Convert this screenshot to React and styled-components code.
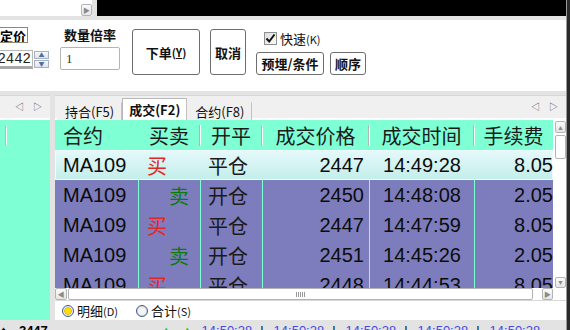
import React from "react";
import styled, { createGlobalStyle } from "styled-components";

const GlobalStyle = createGlobalStyle`
  html, body { margin: 0; padding: 0; background: #e3e3e3; }
  body { font-family: "Liberation Sans", "Noto Sans CJK SC", sans-serif; }
`;

const AQUA = "#7fffd4";
const PURPLE = "#7d7dbe";

const Screen = styled.div`
  width: 570px;
  height: 330px;
  overflow: hidden;
  display: flex;
  background: #e3e3e3;
`;

const Main = styled.div`
  width: 566px;
  display: flex;
  flex-direction: column;
`;

const RightEdge = styled.div`
  width: 4px;
  background: linear-gradient(90deg, #9a9a9a 0 1px, #2a2a2a 1px);
`;

const TopStrip = styled.div`
  height: 16px;
  display: flex;
  gap: 5px;
`;

const ScrollStub = styled.div`
  width: 92px;
  background: #fff;
  display: flex;
  justify-content: flex-end;
  align-items: flex-end;
`;

const ArrowBtn = styled.div`
  width: ${p => p.$w || 10}px;
  height: ${p => p.$h || 11}px;
  border: 1px solid #b4b4b4;
  border-radius: 2px;
  background: linear-gradient(#fafafa, #e6e6e6);
  display: flex;
  align-items: center;
  justify-content: center;
  color: #8a8a8a;
  font-size: 7px;
  line-height: 1;
  box-sizing: border-box;
`;

const BlackBar = styled.div`
  flex: 1;
  background: #000;
`;

const Spacer = styled.div`
  height: ${p => p.$h}px;
  flex-shrink: 0;
`;

const Toolbar = styled.div`
  height: 71px;
  background: #fff;
  display: flex;
  align-items: flex-start;
  font-family: "Noto Sans CJK SC", sans-serif;
`;

const PriceGroup = styled.div`
  width: 50px;
  display: flex;
  flex-direction: column;
  padding-top: 7px;
`;

const PriceTag = styled.div`
  width: 28px;
  height: 16px;
  box-sizing: border-box;
  border: 1px solid #8c8a6e;
  border-left: none;
  display: flex;
  justify-content: flex-end;
  align-items: center;
  overflow: hidden;
  white-space: nowrap;
  font-size: 13px;
  font-weight: 700;
  padding-right: 1px;
`;

const SpinRow = styled.div`
  display: flex;
  margin-top: 7px;
  gap: 1px;
`;

const SpinInput = styled.div`
  width: 33px;
  height: 19px;
  box-sizing: border-box;
  border: 1px solid #b8b8b8;
  border-left: none;
  border-bottom: 3px solid #a8a8a8;
  display: flex;
  justify-content: flex-end;
  align-items: center;
  font-family: "Liberation Mono", monospace;
  font-size: 14px;
  color: #222;
  padding-right: 1px;
`;

const SpinBtns = styled.div`
  display: flex;
  flex-direction: column;
  gap: 1px;
  margin-top: 1px;
`;

const SpinBtn = styled.div`
  width: 15px;
  height: 8px;
  box-sizing: border-box;
  border: 1px solid #a8b0c0;
  background: linear-gradient(#f6f8fb, #dfe4ec);
  display: flex;
  align-items: center;
  justify-content: center;
  color: #4f6fa8;
  font-size: 6px;
  line-height: 1;
`;

const QtyGroup = styled.div`
  margin-left: 10px;
  width: 60px;
  display: flex;
  flex-direction: column;
  align-items: center;
  padding-top: 7px;
`;

const Label = styled.div`
  font-size: 13px;
  font-weight: ${p => (p.$bold ? 700 : 400)};
  line-height: 16px;
  color: #111;
  white-space: nowrap;
`;

const QtyInput = styled.div`
  margin-top: 4px;
  width: 60px;
  height: 23px;
  box-sizing: border-box;
  border: 1px solid #b4b4b4;
  border-radius: 2px;
  display: flex;
  align-items: center;
  padding-left: 5px;
  font-family: "Liberation Serif", serif;
  font-size: 13px;
  color: #333;
`;

const BigButton = styled.div`
  margin-top: 9px;
  margin-left: ${p => p.$ml}px;
  width: ${p => p.$w}px;
  height: 46px;
  box-sizing: border-box;
  border: 1px solid #6e6e6e;
  border-radius: 3px;
  background: #fff;
  display: flex;
  align-items: center;
  justify-content: center;
  font-size: 13px;
  font-weight: 700;
  color: #111;
  white-space: nowrap;
`;

const SmallButton = styled.div`
  width: ${p => p.$w}px;
  height: 23px;
  box-sizing: border-box;
  border: 1px solid #6e6e6e;
  border-radius: 3px;
  background: #fff;
  display: flex;
  align-items: center;
  justify-content: center;
  font-size: 13px;
  font-weight: 700;
  color: #111;
  white-space: nowrap;
`;

const Key = styled.span`
  font-size: 11px;
  text-decoration: ${p => (p.$u ? "underline" : "none")};
`;

const OptGroup = styled.div`
  margin-left: 10px;
  display: flex;
  flex-direction: column;
  padding-top: 12px;
`;

const CheckRow = styled.div`
  display: flex;
  align-items: center;
  gap: 3px;
  margin-left: 8px;
  height: 13px;
`;

const CheckBox = styled.div`
  width: 13px;
  height: 13px;
  box-sizing: border-box;
  border: 1px solid #8e8f8f;
  background: linear-gradient(135deg, #dcdcdc, #fbfbfb);
  display: flex;
  align-items: center;
  justify-content: center;
`;

const OptButtons = styled.div`
  display: flex;
  gap: 6px;
  margin-top: 7px;
`;

const Lower = styled.div`
  height: 225px;
  display: flex;
  gap: 5px;
`;

const LeftPanel = styled.div`
  width: 50px;
  display: flex;
  flex-direction: column;
  background: ${AQUA};
`;

const TabBar = styled.div`
  height: 25px;
  background: #f0f0f0;
  border-top: 1px solid #d6d6d6;
  border-bottom: 2px solid #fff;
  box-sizing: border-box;
  display: flex;
  align-items: flex-end;
  padding-left: 2px;
  padding-right: 8px;
`;

const TabArrows = styled.div`
  margin-left: auto;
  align-self: center;
  display: flex;
  gap: 9px;
  color: #555;
  font-size: 9px;
  line-height: 1;
  padding-top: 1px;
`;

const Tab = styled.div`
  height: ${p => (p.$active ? 22 : 18)}px;
  padding: 0 ${p => (p.$active ? 6 : 7)}px;
  box-sizing: border-box;
  display: flex;
  align-items: center;
  font-family: "Noto Sans CJK SC", sans-serif;
  font-size: 13px;
  font-weight: ${p => (p.$active ? 700 : 400)};
  color: #111;
  background: ${p => (p.$active ? "#fff" : "#f0f0f0")};
  border: 1px solid ${p => (p.$active ? "#b8b8b8" : "transparent")};
  border-bottom: none;
  border-right: 1px solid #c2c2c2;
  margin-bottom: -2px;
`;

const LeftHeader = styled.div`
  height: 30px;
  position: relative;
  &::before {
    content: "";
    position: absolute;
    left: 5px;
    top: 5px;
    bottom: 4px;
    width: 1px;
    background: #b8b8b8;
    box-shadow: 1px 0 0 #fff;
  }
`;

const RightPanel = styled.div`
  width: 511px;
  display: flex;
  flex-direction: column;
  background: #fff;
`;

const TableArea = styled.div`
  height: 168px;
  display: flex;
`;

const GridViewport = styled.div`
  width: 498px;
  overflow: hidden;
  background: ${PURPLE};
`;

const COLS = "83px 62px 62px 107px 105px 79px";

const HeaderRow = styled.div`
  display: grid;
  grid-template-columns: ${COLS};
  height: 30px;
  background: ${AQUA};
`;

const HeadCell = styled.div`
  position: relative;
  display: flex;
  align-items: center;
  justify-content: ${p => (p.$left ? "flex-start" : "center")};
  padding-left: ${p => (p.$left ? 8 : 0)}px;
  font-family: "Noto Sans CJK SC", sans-serif;
  font-size: 20px;
  color: #1a1a1a;
  white-space: nowrap;
  & + &::before {
    content: "";
    position: absolute;
    left: -1px;
    top: 5px;
    bottom: 4px;
    width: 1px;
    background: #b4b4b4;
    box-shadow: 1px 0 0 #fff;
  }
`;

const Row = styled.div`
  display: grid;
  grid-template-columns: ${COLS};
  height: 30px;
  box-sizing: border-box;
  background: ${p => (p.$selected ? "linear-gradient(#e6f9fb, #c2eeea)" : PURPLE)};
  box-shadow: ${p => (p.$selected ? "inset 0 0 0 1px #eefcfc" : "none")};
  & > div + div {
    border-left: 1px solid ${p => (p.$selected ? "transparent" : AQUA)};
  }
`;

const Cell = styled.div`
  display: flex;
  align-items: center;
  justify-content: ${p => (p.$align === "right" ? "flex-end" : p.$align === "center" ? "center" : "flex-start")};
  padding: 0 ${p => p.$pr || 0}px 0 ${p => p.$pl || 0}px;
  font-size: 20px;
  color: #0c0c0c;
  white-space: nowrap;
  overflow: hidden;
`;

const CnCell = styled(Cell)`
  font-family: "Noto Sans CJK SC", sans-serif;
  color: ${p => p.$color || "#1a1a1a"};
`;

const VScroll = styled.div`
  width: 13px;
  background: #fff;
  display: flex;
  flex-direction: column;
  align-items: flex-end;
  padding-top: 1px;
  box-sizing: border-box;
`;

const VThumb = styled.div`
  width: 11px;
  height: 24px;
  margin-top: 2px;
  box-sizing: border-box;
  border: 1px solid #b4b4b4;
  border-radius: 2px;
  background: #fff;
`;

const VTrack = styled.div`
  flex: 1;
`;

const HScrollRow = styled.div`
  height: 12px;
  display: flex;
  background: #fff;
`;

const HScroll = styled.div`
  width: 498px;
  display: flex;
  align-items: stretch;
  gap: 1px;
`;

const HThumb = styled.div`
  flex: 1;
  margin-right: 8px;
  box-sizing: border-box;
  border: 1px solid #b4b4b4;
  border-radius: 2px;
  display: flex;
  align-items: center;
  justify-content: center;
`;

const Grip = styled.div`
  width: 10px;
  height: 5px;
  background: repeating-linear-gradient(90deg, #9a9a9a 0 1px, transparent 1px 2px);
`;

const RadioRow = styled.div`
  height: 20px;
  display: flex;
  align-items: center;
  padding-left: 7px;
  gap: 18px;
  border-top: 1px solid #d8d8d8;
  box-sizing: border-box;
  font-family: "Noto Sans CJK SC", sans-serif;
`;

const RadioItem = styled.div`
  display: flex;
  align-items: center;
  gap: 3px;
`;

const Radio = styled.div`
  width: 12px;
  height: 12px;
  border-radius: 50%;
  box-sizing: border-box;
  border: 1px solid #3c5a8a;
  background: radial-gradient(circle, ${p => (p.$on ? "#ffe100 0 2.5px, #e4b800 3.5px, #eef 4px" : "#f4f4f4 0 3px, #dcdcdc 5px")});
`;

const StatusBar = styled.div`
  flex: 1;
  display: flex;
  align-items: flex-start;
  padding-top: 4px;
  font-size: 13px;
  line-height: 14px;
  white-space: nowrap;
  overflow: hidden;
`;

const StatusText = styled.span`
  color: ${p => p.$color || "#000"};
  margin-left: ${p => p.$ml || 0}px;
  font-weight: ${p => (p.$bold ? 700 : 400)};
`;

const Check = () => (
  <svg width="11" height="11" viewBox="0 0 11 11">
    <path d="M1.5 5.5 L4.2 8.5 L9.5 1.5" fill="none" stroke="#111" strokeWidth="2" />
  </svg>
);

const trades = [
  { side: "买", oc: "平仓", price: "2447", time: "14:49:28", fee: "8.05" },
  { side: "卖", oc: "开仓", price: "2450", time: "14:48:08", fee: "2.05" },
  { side: "买", oc: "平仓", price: "2447", time: "14:47:59", fee: "8.05" },
  { side: "卖", oc: "开仓", price: "2451", time: "14:45:26", fee: "2.05" },
  { side: "买", oc: "平仓", price: "2448", time: "14:44:53", fee: "8.05" },
];

const TradeRow = ({ t, selected }) => {
  const buy = t.side === "买";
  return (
    <Row $selected={selected}>
      <Cell $pl={8}>MA109</Cell>
      <CnCell
        $align={buy ? "left" : "right"}
        $pl={buy ? 8 : 0}
        $pr={buy ? 0 : 11}
        $color={buy ? "#e02828" : "#0c7a0c"}
      >
        {t.side}
      </CnCell>
      <CnCell $pl={7}>{t.oc}</CnCell>
      <Cell $align="right" $pr={5}>{t.price}</Cell>
      <Cell $align="center">{t.time}</Cell>
      <Cell $align="right" $pr={0}>{t.fee}</Cell>
    </Row>
  );
};

export default function App() {
  return (
    <>
      <GlobalStyle />
      <Screen>
        <Main>
          <TopStrip>
            <ScrollStub>
              <ArrowBtn $w={11} $h={12}>▶</ArrowBtn>
            </ScrollStub>
            <BlackBar />
          </TopStrip>
          <Spacer $h={4} />
          <Toolbar>
            <PriceGroup>
              <PriceTag>限定价</PriceTag>
              <SpinRow>
                <SpinInput>2442</SpinInput>
                <SpinBtns>
                  <SpinBtn>▲</SpinBtn>
                  <SpinBtn>▼</SpinBtn>
                </SpinBtns>
              </SpinRow>
            </PriceGroup>
            <QtyGroup>
              <Label $bold>数量倍率</Label>
              <QtyInput>1</QtyInput>
            </QtyGroup>
            <BigButton $ml={12} $w={68}>
              下单<Key>(<Key $u>Y</Key>)</Key>
            </BigButton>
            <BigButton $ml={10} $w={36}>取消</BigButton>
            <OptGroup>
              <CheckRow>
                <CheckBox><Check /></CheckBox>
                <Label>快速<Key>(K)</Key></Label>
              </CheckRow>
              <OptButtons>
                <SmallButton $w={68}>预埋/条件</SmallButton>
                <SmallButton $w={36}>顺序</SmallButton>
              </OptButtons>
            </OptGroup>
          </Toolbar>
          <Spacer $h={4} />
          <Lower>
            <LeftPanel>
              <TabBar>
                <TabArrows>
                  <span>◁</span>
                  <span>▷</span>
                </TabArrows>
              </TabBar>
              <LeftHeader />
            </LeftPanel>
            <RightPanel>
              <TabBar>
                <Tab>持合(F5)</Tab>
                <Tab $active>成交(F2)</Tab>
                <Tab>合约(F8)</Tab>
                <TabArrows>
                  <span>◁</span>
                  <span>▷</span>
                </TabArrows>
              </TabBar>
              <TableArea>
                <GridViewport>
                  <HeaderRow>
                    <HeadCell $left>合约</HeadCell>
                    <HeadCell>买卖</HeadCell>
                    <HeadCell>开平</HeadCell>
                    <HeadCell>成交价格</HeadCell>
                    <HeadCell>成交时间</HeadCell>
                    <HeadCell>手续费</HeadCell>
                  </HeaderRow>
                  {trades.map((t, i) => (
                    <TradeRow key={i} t={t} selected={i === 0} />
                  ))}
                </GridViewport>
                <VScroll>
                  <ArrowBtn $w={11} $h={12}>▲</ArrowBtn>
                  <VThumb />
                  <VTrack />
                  <ArrowBtn $w={11} $h={11}>▼</ArrowBtn>
                </VScroll>
              </TableArea>
              <HScrollRow>
                <HScroll>
                  <ArrowBtn $w={12} $h={12}>◀</ArrowBtn>
                  <HThumb><Grip /></HThumb>
                  <ArrowBtn $w={11} $h={12}>▶</ArrowBtn>
                </HScroll>
              </HScrollRow>
              <RadioRow>
                <RadioItem>
                  <Radio $on />
                  <Label>明细<Key>(D)</Key></Label>
                </RadioItem>
                <RadioItem>
                  <Radio />
                  <Label>合计<Key>(S)</Key></Label>
                </RadioItem>
              </RadioRow>
            </RightPanel>
          </Lower>
          <StatusBar>
            <StatusText>♠</StatusText>
            <StatusText $ml={12} $bold>2447</StatusText>
            <StatusText $ml={112} $color="#18c018">▲</StatusText>
            <StatusText $ml={8} $color="#18c018">▲</StatusText>
            <StatusText $ml={8} $color="#4848e0">14:50:28</StatusText>
            <StatusText $ml={8}>|</StatusText>
            <StatusText $ml={10} $color="#4848e0">14:50:28</StatusText>
            <StatusText $ml={8}>|</StatusText>
            <StatusText $ml={10} $color="#4848e0">14:50:28</StatusText>
            <StatusText $ml={8}>|</StatusText>
            <StatusText $ml={10} $color="#4848e0">14:50:28</StatusText>
            <StatusText $ml={8}>|</StatusText>
            <StatusText $ml={10} $color="#4848e0">14:50:28</StatusText>
          </StatusBar>
        </Main>
        <RightEdge />
      </Screen>
    </>
  );
}
